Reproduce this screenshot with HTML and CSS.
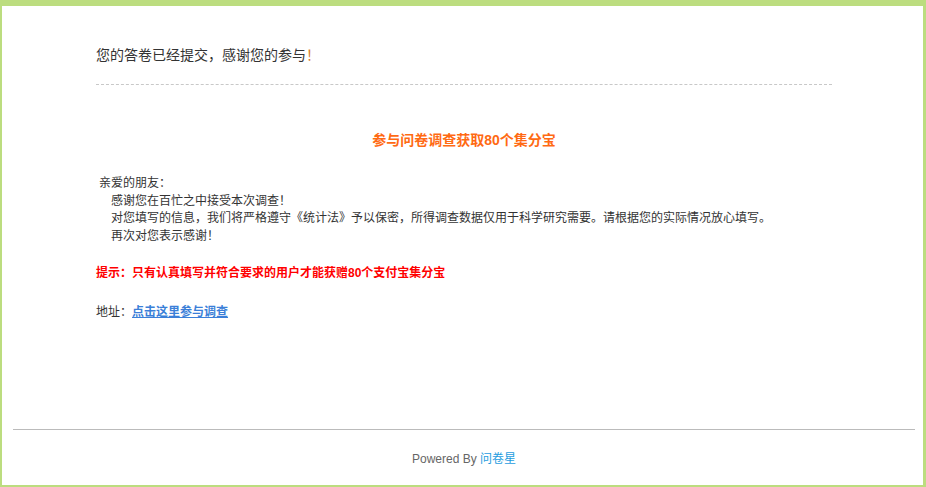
FILE: index.html
```html
<!DOCTYPE html>
<html lang="zh-CN">
<head>
<meta charset="utf-8">
<title>提交成功</title>
<link rel="stylesheet" href="styles.css">
</head>
<body>
<div class="frame">
  <div class="main">
    <div class="done">您的答卷已经提交，感谢您的参与<span class="bang">！</span></div>
    <div class="dash"></div>
    <div class="title">参与问卷调查获取80个集分宝</div>
    <div class="letter">
      <p class="greet">亲爱的朋友：</p>
      <p class="ind">感谢您在百忙之中接受本次调查！</p>
      <p class="ind">对您填写的信息，我们将严格遵守《统计法》予以保密，所得调查数据仅用于科学研究需要。请根据您的实际情况放心填写。</p>
      <p class="ind">再次对您表示感谢！</p>
    </div>
    <p class="tip">提示：只有认真填写并符合要求的用户才能获赠80个支付宝集分宝</p>
    <p class="addr">地址：<a class="addr-link" href="#">点击这里参与调查</a></p>
  </div>
  <div class="footer">
    <span class="pw">Powered By</span> <a class="brand" href="#">问卷星</a>
  </div>
</div>
</body>
</html>
```

FILE: styles.css
```css
html, body {
  margin: 0;
  padding: 0;
  background: #fff;
}
body {
  font-family: "Liberation Sans", "Noto Sans CJK SC", sans-serif;
  color: #333;
  font-size: 12px;
}
.frame {
  box-sizing: border-box;
  height: 487px;
  border-style: solid;
  border-color: #bcdd7f;
  border-width: 6px 3px 2px 2px;
  display: flex;
  flex-direction: column;
}
.main {
  margin-left: 94px;
  width: 736px;
  padding-top: 39px;
  flex: 1;
}
.done {
  font-size: 14px;
  line-height: 20px;
  color: #333;
}
.bang {
  color: #d9822b;
}
.dash {
  margin-top: 19px;
  border-top: 1px dashed #c8c8c8;
}
.title {
  margin-top: 45px;
  text-align: center;
  font-size: 14px;
  line-height: 20px;
  font-weight: bold;
  color: #ff6a13;
}
.letter {
  margin-top: 25px;
}
.letter p {
  margin: 0;
  line-height: 17.5px;
}
.greet {
  padding-left: 3px;
}
.ind {
  padding-left: 15px;
}
.tip {
  margin: 20px 0 0;
  line-height: 17.5px;
  color: #f00;
  font-weight: bold;
}
.addr {
  margin: 21px 0 0;
  line-height: 17.5px;
}
.addr-link {
  color: #3b7fd8;
  font-weight: bold;
  text-decoration: underline;
}
.footer {
  margin: 0 8px 0 11px;
  border-top: 1px solid #bbb;
  height: 56px;
  box-sizing: border-box;
  padding-top: 21px;
  text-align: center;
  line-height: 17px;
  color: #666;
}
.brand {
  color: #1f9de0;
  text-decoration: none;
}
```
